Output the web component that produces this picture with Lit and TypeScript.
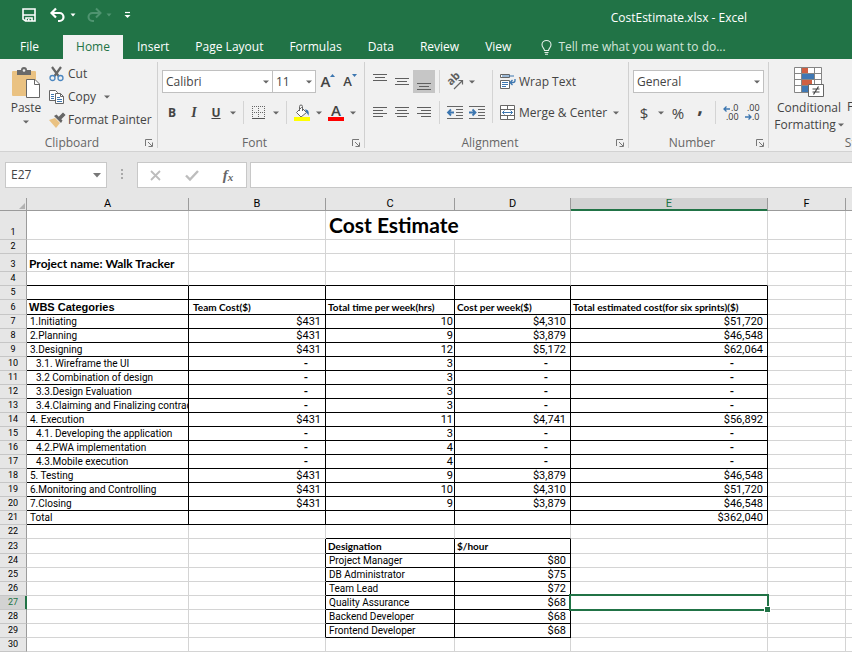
import { LitElement, html, css, svg, nothing } from "lit";
import { customElement, property } from "lit/decorators.js";
import { classMap } from "lit/directives/class-map.js";

const ink = "#5f5f5f";
const blue = "#3c76b0";

const icons: Record<string, { w: number; h: number; art: unknown }> = {
  save: {
    w: 14, h: 14,
    art: svg`<path d="M1 1h12v12H3.500L1 11z" fill="none" stroke="#fff" stroke-width="1.600"/><path d="M1 7h12M4 13v-3h6v3" fill="none" stroke="#fff" stroke-width="1.600"/><path d="M6 11h1.500v2H6z" fill="#fff"/>`,
  },
  undo: {
    w: 16, h: 14,
    art: svg`<path d="M6 0.500L1.500 5L6 9.500M2 5h7.500a4 4 0 0 1 0 8H8" fill="none" stroke="#fff" stroke-width="2.200"/>`,
  },
  redo: {
    w: 16, h: 14,
    art: svg`<path d="M10 .5l4.500 4.500L10 9.500M14 5H6.500a4 4 0 0 0 0 8H8" fill="none" stroke="#4f9470" stroke-width="2"/>`,
  },
  customize: { w: 7, h: 8, art: svg`<path d="M1 1.500h5" stroke="#fff" stroke-width="1.200"/><path d="M0.500 4h6l-3 3z" fill="#fff"/>` },
  bulb: {
    w: 11, h: 15,
    art: svg`<path d="M3.500 10.500C3.500 8.500 1 7.500 1 4.800a4.500 4.300 0 0 1 9 0C10 7.500 7.500 8.500 7.500 10.500zM3.500 12.500h4M4 14.300h3" fill="none" stroke="#e3efe8" stroke-width="1.100"/>`,
  },
  paste: {
    w: 30, h: 32,
    art: svg`<rect x="1" y="4" width="24" height="25" rx="1" fill="#eac282"/><path d="M6 3h4a3 3 0 0 1 6 0h4v5H6z" fill="#6a6a6a"/><circle cx="13" cy="3.500" r="1.300" fill="#f1f1f1"/><path d="M15.500 12.500h8.500l4.500 4.500v13.500h-13z" fill="#fff" stroke="#666"/><path d="M23.500 12.500v5h5" fill="none" stroke="#666"/>`,
  },
  cut: {
    w: 16, h: 16,
    art: svg`<path d="M3 1l6.500 9M12 1L5.500 10" stroke="#666" stroke-width="2.200" fill="none"/><circle cx="3.500" cy="12" r="2.500" fill="none" stroke="#4a86c0" stroke-width="1.300"/><circle cx="11.500" cy="12" r="2.500" fill="none" stroke="#4a86c0" stroke-width="1.300"/>`,
  },
  copy: {
    w: 16, h: 16,
    art: svg`<path d="M.5 1.500h6l2 2v8h-8z" fill="#fff" stroke="#666"/><path d="M6.500 4.500h5l3 3v7h-8z" fill="#fff" stroke="#666"/><path d="M11.500 4.500v3h3" fill="none" stroke="#666"/><path d="M2 5.500h3M2 7.500h3M2 9.500h3M8 8.500h3M8 10.500h5M8 12.500h5" stroke="${blue}"/>`,
  },
  brush: {
    w: 16, h: 16,
    art: svg`<path d="M0 8l6-2 5 5-4 5z" fill="#eac282"/><path d="M5 4l2.500-1.500 6 6L12 11z" fill="#666"/><path d="M9.500 6L14 1.500l1.500 1.500L11 7.500z" stroke="#666" stroke-width="1.500" fill="#666"/>`,
  },
  launcher: {
    w: 8, h: 8,
    art: svg`<path d="M.5 7V.5H7" fill="none" stroke="#777"/><path d="M3 3l4 4M7.500 3.500v4h-4" fill="none" stroke="#777"/>`,
  },
  caret: { w: 6, h: 4, art: svg`<path d="M0 .5h6L3 3.500z" fill="#666"/>` },
  caretWide: { w: 8, h: 5, art: svg`<path d="M0 0h8L4 4.500z" fill="#777"/>` },
  caretLight: { w: 6, h: 4, art: svg`<path d="M.5.5h5L3 3.500z" fill="#fff"/>` },
  caretDim: { w: 6, h: 4, art: svg`<path d="M.5.5h5L3 3.500z" fill="#4f9470"/>` },
  up: { w: 5, h: 3, art: svg`<path d="M0 3h5L2.500 0z" fill="${blue}"/>` },
  down: { w: 5, h: 3, art: svg`<path d="M0 0h5L2.500 3z" fill="${blue}"/>` },
  borders: {
    w: 14, h: 14,
    art: svg`<path d="M.5 0v12M6.500 0v12M12.500 0v12M0 .5h13M0 6.500h13" stroke="#666" stroke-dasharray="1 1" fill="none"/><path d="M0 12.500h13" stroke="#555"/>`,
  },
  fill: {
    w: 16, h: 16,
    art: svg`<path d="M7.500 2.500l5 5-5.500 4.500-4.500-4.500z" fill="#fff" stroke="#666"/><path d="M5.500 6V1.500a1.500 1.500 0 0 1 3 0V6" fill="none" stroke="#666"/><path d="M11 4.500c3 0 4.500 2 3.500 6.500-.5-2-1.500-2.500-2-3.500z" fill="${blue}"/><path d="M0 12h16v4H0z" fill="#ff0"/>`,
  },
  orient: {
    w: 16, h: 16,
    art: svg`<text x="0" y="0" transform="translate(4 12) rotate(-45)" font-family="Open Sans, sans-serif" font-size="11" font-weight="700" fill="#5f5f5f">ab</text><path d="M7 15l8.500-8.500M11.500 6.500h4v4" fill="none" stroke="#666" stroke-width="1.200"/>`,
  },
  outdent: {
    w: 16, h: 14,
    art: svg`<path d="M0 .5h16M9 3.500h7M9 6.500h7M9 9.500h7M0 12.500h16" stroke="#666"/><path d="M7 6.500H1.500M4 3.500l-3 3 3 3" stroke="${blue}" stroke-width="1.800" fill="none"/>`,
  },
  indent: {
    w: 16, h: 14,
    art: svg`<path d="M0 .5h16M9 3.500h7M9 6.500h7M9 9.500h7M0 12.500h16" stroke="#666"/><path d="M0 6.500h6M3.500 3.500l3 3-3 3" stroke="${blue}" stroke-width="1.800" fill="none"/>`,
  },
  wrap: {
    w: 16, h: 16,
    art: svg`<path d="M.5.5h9v3h-9zM.5 6.500h9v8h-9z" fill="#fff" stroke="#666"/><path d="M2 2h12M2 8.500h6M2 10.500h6M2 12.500h4" stroke="${blue}"/><path d="M15 5v1.500a2 2 0 0 1-2 2h-2.500M12.500 6l-2.500 2.500 2.500 2.500" fill="none" stroke="${blue}" stroke-width="1.300"/>`,
  },
  merge: {
    w: 16, h: 16,
    art: svg`<path d="M.5.5h14v14H.5zM.5 4.500h14M.5 10.500h14M7.500 .5v4M7.500 10.500v4" fill="#fff" stroke="#666"/><path d="M2.500 7.500h10M4.500 5.500l-2 2 2 2M10.500 5.500l2 2-2 2" fill="none" stroke="${blue}"/>`,
  },
  moreDecimals: {
    w: 16, h: 16,
    art: svg`<path d="M1 4h6M3.500 1.500L1 4l2.500 2.500" fill="none" stroke="${blue}" stroke-width="1.300"/><g font-family="Open Sans, sans-serif" font-size="9" fill="#333"><text x="8" y="6">.0</text><text x="3" y="15">.00</text></g>`,
  },
  fewerDecimals: {
    w: 16, h: 16,
    art: svg`<path d="M0 12h6M3.500 9.500L6 12l-2.500 2.500" fill="none" stroke="${blue}" stroke-width="1.300"/><g font-family="Open Sans, sans-serif" font-size="9" fill="#333"><text x="2" y="6">.00</text><text x="7" y="15">.0</text></g>`,
  },
  conditional: {
    w: 30, h: 31,
    art: svg`<path d="M.5.5h27v25H.5z" fill="#fff"/><path d="M8 1h6v6H8zM8 13h10v6H8z" fill="#cf5f42"/><path d="M8 7h12v6H8zM8 19h6v6H8z" fill="#3f78b4"/><path d="M.5.5h27v25H.5zM.5 6.500h27M.5 12.500h27M.5 18.500h27M7.500 .5v25M20.500 .5v25" fill="none" stroke="#858585"/><path d="M14.500 17.500h15v12h-15z" fill="#fff" stroke="#666"/><path d="M18.500 22h7M18.500 25h7M24.500 19.500l-5 8" stroke="#444" stroke-width="1.200"/>`,
  },
  tableStyle: { w: 30, h: 31, art: svg`<path d="M.5.5h27v25H.5zM.5 6.500h27M.5 12.500h27M9.500.5v25M18.500.5v25" fill="#fff" stroke="#858585"/>` },
  dots: { w: 3, h: 12, art: svg`<path d="M0 0h2v2H0zM0 4h2v2H0zM0 8h2v2H0z" fill="#a9a9a9"/>` },
  cancel: { w: 12, h: 11, art: svg`<path d="M1 1l9 9M10 1l-9 9" stroke="#bdbdbd" stroke-width="1.800"/>` },
  enter: { w: 14, h: 11, art: svg`<path d="M1 5.500l4 4L13 1" fill="none" stroke="#bdbdbd" stroke-width="2.400"/>` },
  corner: { w: 6, h: 6, art: svg`<path d="M6 0v6H0z" fill="#b2b2b2"/>` },
};

for (const side of ["left", "center", "right"]) {
  const x = side === "left" ? 0 : side === "center" ? 2 : 4;
  icons["align-" + side] = {
    w: 14, h: 14,
    art: svg`<path d="M0 1.500h14M${x} 4.500h10M0 7.500h14M${x} 10.500h10" stroke="${ink}"/>`,
  };
}
for (const [name, y] of [["top", 0], ["middle", 4], ["bottom", 9]] as [string, number][]) {
  icons["align-" + name] = {
    w: 14, h: 20,
    art: svg`<path d="M0 ${y + 2}.500h14M2 ${y + 5}.500h10M0 ${y + 8}.500h14" stroke="${ink}"/>`,
  };
}

const icon = (name: string) => {
  const i = icons[name];
  return html`<svg class="icon" width=${i.w} height=${i.h} viewBox="0 0 ${i.w} ${i.h}" aria-hidden="true">${i.art}</svg>`;
};

const shared = css`
  :host, * { box-sizing: border-box; }
  button, input, select {
    font: inherit; color: inherit; border: 0; margin: 0; padding: 0;
    background: none; border-radius: 0; outline: 0;
  }
  button { display: flex; align-items: center; justify-content: center; white-space: nowrap; }
  .icon { display: block; flex: none; overflow: visible; }
`;

@customElement("title-bar")
export class TitleBar extends LitElement {
  static styles = [shared, css`
    :host { display: block; background: #217346; color: #fff; }
    .top { display: flex; align-items: center; height: 35px; padding: 0 105px 5px 18px; }
    .quick { display: flex; align-items: center; flex: 1; }
    .quick button { width: 22px; height: 22px; }
    .quick .undo { margin-left: 7px; }
    .quick .redo { margin-left: 6px; }
    .quick .drop { width: 8px; }
    .quick .more { width: 8px; margin-left: 10px; }
    .name { font-size: 12px; line-height: 16px; padding-top: 5px; }
    .tabs { display: flex; height: 24px; overflow: hidden; }
    .tabs button { padding: 0 13px; }
    .tabs .file { width: 63px; padding: 0 4px 0 0; }
    .tabs .on { width: 60px; margin-right: 1px; padding: 0; background: #f1f1f1; color: #217346; }
    .tabs .tell { gap: 6px; margin-left: 4px; color: #d3e5da; }
  `];

  render() {
    return html`
      <header class="top">
        <div class="quick">
          <button aria-label="Save">${icon("save")}</button>
          <button class="undo" aria-label="Undo">${icon("undo")}</button>
          <button class="drop" aria-label="Undo list">${icon("caretLight")}</button>
          <button class="redo" aria-label="Redo">${icon("redo")}</button>
          <button class="drop" aria-label="Redo list">${icon("caretDim")}</button>
          <button class="more" aria-label="Customize toolbar">${icon("customize")}</button>
        </div>
        <div class="name">CostEstimate.xlsx - Excel</div>
      </header>
      <nav class="tabs">
        <button class="file">File</button>
        <button class="on">Home</button>
        ${["Insert", "Page Layout", "Formulas", "Data", "Review", "View"].map((t) => html`<button>${t}</button>`)}
        <button class="tell">${icon("bulb")}Tell me what you want to do...</button>
      </nav>`;
  }
}

@customElement("ribbon-group")
export class RibbonGroup extends LitElement {
  @property() label = "";
  @property({ type: Boolean }) plain = false;
  static styles = [shared, css`
    :host { display: flex; flex-direction: column; flex: none; height: 86px; border-right: 1px solid #d0d0d0; }
    .body { flex: 1; display: flex; }
    .foot { display: flex; align-items: center; height: 16px; padding: 0 3px 0 0; margin-bottom: -3px; }
    .foot span { flex: 1; text-align: center; color: #666; }
    .foot button { width: 10px; height: 10px; }
  `];

  render() {
    return html`
      <div class="body"><slot></slot></div>
      <div class="foot">
        <span>${this.label}</span>
        ${this.plain ? nothing : html`<button aria-label="${this.label} settings">${icon("launcher")}</button>`}
      </div>`;
  }
}

@customElement("ribbon-bar")
export class RibbonBar extends LitElement {
  static styles = [shared, css`
    :host { display: flex; height: 93px; padding-top: 3px; overflow: hidden; background: #f1f1f1; color: #444; border-bottom: 1px solid #d2d2d2; }
    .clipboard { width: 158px; }
    .font { width: 207px; }
    .alignment { width: 264px; }
    .number { width: 140px; }
    .styles { width: 188px; }
    .rows { display: flex; flex-direction: column; gap: 8px; padding-top: 8px; }
    .row { display: flex; align-items: center; height: 23px; }
    .row > button { width: 22px; height: 23px; }
    .row > .drop { width: 12px; }
    .row > .on { background: #c6c6c6; }
    .pad { padding-left: 4px; }
    .tight { padding-left: 3px; }
    .sep { width: 1px; align-self: stretch; margin: 0 4px; background: #d4d4d4; }
    .tall { margin-top: 8px; margin-bottom: 12px; }
    .big { flex-direction: column; justify-content: flex-start; line-height: 17px; padding-top: 5px; }
    .paste { width: 34px; margin-left: 9px; }
    .paste .icon + span { padding-bottom: 4px; }
    .conditional { width: 70px; margin-left: 5px; }
    .conditional .icon + span { padding-top: 1px; }
    .astable { width: 60px; margin-left: 1px; }
    .two { display: flex; align-items: center; gap: 2px; }
    .list { display: flex; flex-direction: column; padding: 0 0 0 6px; }
    .list button { height: 23px; gap: 3px; justify-content: flex-start; }
    .list .line { display: flex; align-items: center; gap: 8px; }
    .row > .wide { width: auto; gap: 3px; padding-left: 3px; }
    .row > .gap { margin-left: 3px; }
    .combo { position: relative; display: flex; }
    .combo select { width: 100%; height: 23px; padding: 0 3px; appearance: none; background: #fff; border: 1px solid #c0c0c0; }
    .combo .icon { position: absolute; right: 4px; top: 10px; pointer-events: none; }
    .family { width: 111px; }
    .size { width: 44px; margin-left: -1px; margin-right: 1px; }
    .format { width: 131px; }
    .bold { font-weight: 700; }
    .italic { font-style: italic; font-weight: 600; font-family: "Liberation Serif", serif; font-size: 14px; }
    .under { font-weight: 700; text-decoration: underline; }
    .grow, .shrink { align-items: flex-start; font-weight: 600; line-height: 22px; }
    .grow { font-size: 15px; }
    .shrink { font-size: 13px; }
    .grow .icon, .shrink .icon { margin-top: 4px; }
    .colour { flex-direction: column; font-size: 15px; font-weight: 600; line-height: 13px; }
    .bar { width: 16px; height: 4px; background: #f00; }
    .sign { font-size: 15px; }
    .row > .comma { font-size: 20px; font-weight: 700; line-height: 23px; padding-bottom: 14px; }
  `];

  render() {
    const drop = (label: string) => html`<button class="drop" aria-label=${label}>${icon("caret")}</button>`;
    const tool = (name: string, label: string, on = false) =>
      html`<button class=${classMap({ on })} aria-label=${label}>${icon(name)}</button>`;
    const sep = html`<span class="sep"></span>`;
    return html`
      <ribbon-group class="clipboard" label="Clipboard">
        <button class="big paste">${icon("paste")}<span>Paste</span>${icon("caret")}</button>
        <div class="list">
          <button>${icon("cut")}Cut</button>
          <div class="line"><button>${icon("copy")}Copy</button>${drop("Copy options")}</div>
          <button>${icon("brush")}Format Painter</button>
        </div>
      </ribbon-group>
      <ribbon-group class="font" label="Font">
        <div class="rows">
          <div class="row pad">
            <label class="combo family"><select aria-label="Font"><option>Calibri</option></select>${icon("caret")}</label>
            <label class="combo size"><select aria-label="Font size"><option>11</option></select>${icon("caret")}</label>
            <button class="grow" aria-label="Increase font size">A${icon("up")}</button>
            <button class="shrink" aria-label="Decrease font size">A${icon("down")}</button>
          </div>
          <div class="row tight">
            <button class="bold">B</button>
            <button class="italic">I</button>
            <button class="under">U</button>
            ${drop("Underline options")}${sep}${tool("borders", "Borders")}${drop("Border options")}
            ${sep}${tool("fill", "Fill colour")}${drop("Fill options")}
            <button class="colour" aria-label="Font colour">A<span class="bar"></span></button>${drop("Font colour options")}
          </div>
        </div>
      </ribbon-group>
      <ribbon-group class="alignment" label="Alignment">
        <div class="rows">
          <div class="row pad">
            ${tool("align-top", "Top align")}${tool("align-middle", "Middle align")}${tool("align-bottom", "Bottom align", true)}
            ${sep}${tool("orient", "Orientation")}${drop("Orientation options")}
          </div>
          <div class="row pad">
            ${tool("align-left", "Align left")}${tool("align-center", "Center")}${tool("align-right", "Align right")}
            ${sep}${tool("outdent", "Decrease indent")}${tool("indent", "Increase indent")}
          </div>
        </div>
        <span class="sep tall"></span>
        <div class="rows">
          <div class="row"><button class="wide">${icon("wrap")}Wrap Text</button></div>
          <div class="row">
            <button class="wide">${icon("merge")}Merge &amp; Center</button>
            <button class="drop gap" aria-label="Merge options">${icon("caret")}</button>
          </div>
        </div>
      </ribbon-group>
      <ribbon-group class="number" label="Number">
        <div class="rows">
          <div class="row pad">
            <label class="combo format"><select aria-label="Number format"><option>General</option></select>${icon("caret")}</label>
          </div>
          <div class="row pad">
            <button class="sign">$</button>${drop("Currency options")}
            <button class="sign">%</button>
            <button class="comma">,</button>
            ${sep}${tool("moreDecimals", "Increase decimal")}${tool("fewerDecimals", "Decrease decimal")}
          </div>
        </div>
      </ribbon-group>
      <ribbon-group class="styles" label="Styles" plain>
        <button class="big conditional">${icon("conditional")}<span>Conditional</span><span class="two">Formatting${icon("caret")}</span></button>
        <button class="big astable">${icon("tableStyle")}<span>Format as</span><span class="two">Table${icon("caret")}</span></button>
      </ribbon-group>`;
  }
}

@customElement("formula-bar")
export class FormulaBar extends LitElement {
  static styles = [shared, css`
    :host { display: flex; height: 46px; padding: 10px 0 10px 5px; background: #e6e6e6; color: #444; }
    .box { display: flex; align-items: center; background: #fff; border: 1px solid #c8c8c8; }
    .name { width: 102px; padding: 0 5px; }
    .name input { flex: 1; min-width: 0; }
    .handle { display: flex; align-items: center; width: 30px; padding-left: 14px; }
    .actions { width: 110px; justify-content: space-around; margin-right: 3px; }
    .actions button { width: 30px; height: 20px; }
    .fx { font: italic 700 15px "Liberation Serif", serif; color: #666; }
    .fx small { font-size: 11px; padding-top: 4px; }
    .entry { flex: 1; min-width: 0; border-right: 0; }
    .entry input { width: 100%; }
  `];

  render() {
    return html`
      <div class="box name"><input aria-label="Name box" value="E27" /><button aria-label="Names">${icon("caretWide")}</button></div>
      <div class="handle">${icon("dots")}</div>
      <div class="box actions">
        <button aria-label="Cancel">${icon("cancel")}</button>
        <button aria-label="Enter">${icon("enter")}</button>
        <button class="fx" aria-label="Insert function">f<small>x</small></button>
      </div>
      <div class="box entry"><input aria-label="Formula" /></div>`;
  }
}

/** Row number, then the texts of columns A to E. */
const cells: Record<number, string[]> = {
  1: ["", "", "Cost Estimate"],
  3: ["Project name: Walk Tracker"],
  6: ["WBS Categories", "Team Cost($)", "Total time per week(hrs)", "Cost per week($)", "Total estimated cost(for six sprints)($)"],
  7: ["1.Initiating", "$431", "10", "$4,310", "$51,720"],
  8: ["2.Planning", "$431", "9", "$3,879", "$46,548"],
  9: ["3.Designing", "$431", "12", "$5,172", "$62,064"],
  10: ["3.1. Wireframe the UI", "-", "3", "-", "-"],
  11: ["3.2 Combination of design", "-", "3", "-", "-"],
  12: ["3.3.Design Evaluation", "-", "3", "-", "-"],
  13: ["3.4.Claiming and Finalizing contracts", "-", "3", "-", "-"],
  14: ["4. Execution", "$431", "11", "$4,741", "$56,892"],
  15: ["4.1. Developing the application", "-", "3", "-", "-"],
  16: ["4.2.PWA implementation", "-", "4", "-", "-"],
  17: ["4.3.Mobile execution", "-", "4", "-", "-"],
  18: ["5. Testing", "$431", "9", "$3,879", "$46,548"],
  19: ["6.Monitoring and Controlling", "$431", "10", "$4,310", "$51,720"],
  20: ["7.Closing", "$431", "9", "$3,879", "$46,548"],
  21: ["Total", "", "", "", "$362,040"],
  23: ["", "", "Designation", "$/hour"],
  24: ["", "", "Project Manager", "$80"],
  25: ["", "", "DB Administrator", "$75"],
  26: ["", "", "Team Lead", "$72"],
  27: ["", "", "Quality Assurance", "$68"],
  28: ["", "", "Backend Developer", "$68"],
  29: ["", "", "Frontend Developer", "$68"],
};
const columns = ["A", "B", "C", "D", "E", "F", "G"];

@customElement("work-sheet")
export class WorkSheet extends LitElement {
  static styles = [shared, css`
    :host { display: block; background: #fff; color: #000; font-family: Roboto, sans-serif; font-size: 10px; line-height: 13px; }
    table { width: 100%; table-layout: fixed; border-collapse: separate; border-spacing: 0; }
    .c-row { width: 27px; }
    .c-a { width: 162px; }
    .c-b { width: 137px; }
    .c-c { width: 129px; }
    .c-d { width: 116px; }
    .c-e { width: 197px; }
    .c-f { width: 78px; }
    th, td { padding: 0; border: 0 solid #d4d4d4; border-width: 0 1px 1px 0; white-space: nowrap; font-weight: 400; }
    th:last-child, td:last-child { border-right-width: 0; }
    tr { height: 14px; }
    .r-1 { height: 29px; }
    .r-3 { height: 18px; }
    .r-6, .r-23 { height: 15px; }
    thead tr { height: 13px; }
    thead th { font-size: 11px; line-height: 12px; background: #e6e6e6; border-color: #9b9b9b; }
    thead .picked { background: #d2d2d2; color: #217346; box-shadow: inset 0 -1px #217346; border-bottom-color: #217346; }
    tbody th { background: #e6e6e6; border-color: #c6c6c6; border-right-color: #9b9b9b; font-size: 9px; vertical-align: bottom; }
    tbody .picked { background: #d2d2d2; color: #217346; border-right-color: #217346; box-shadow: inset -1px 0 #217346; }
    .all .icon { margin: 3px 1px 0 auto; }
    td { overflow: hidden; padding: 0 4px 0 3px; vertical-align: bottom; }
    .sub { padding-left: 9px; }
    .num { text-align: right; font-size: 11px; }
    .c { padding-right: 1px; }
    .dash { font-weight: 700; }
    .dash.b { padding-right: 17px; }
    .dash.d { padding-right: 22px; }
    .dash.e { padding-right: 33px; }
    .line-b { border-bottom-color: #000; }
    .line-r { border-right-color: #000; }
    .head, .name, .title { font-family: Lato, sans-serif; font-weight: 700; padding: 0 0 0 2px; }
    .head.b { padding-left: 4px; }
    .name { font-size: 12px; line-height: 15px; }
    .wbs { font-family: "Liberation Sans", sans-serif; font-weight: 700; font-size: 11px; padding-left: 2px; }
    .title { font-size: 21px; line-height: 28px; padding-left: 3px; }
    .current { position: relative; overflow: visible; }
    .cursor { position: absolute; inset: -2px; border: 2px solid #217346; }
    .grip { position: absolute; right: -4px; bottom: -4px; width: 7px; height: 7px; background: #217346; border: 1px solid #fff; }
  `];

  private cell(row: number, col: number) {
    const text = cells[row]?.[col] ?? "";
    const inMain = col < 5 && row > 4 && row < 22;
    const inSmall = (col === 2 || col === 3) && row > 22 && row < 30;
    const num = /^(\$?[\d,]+|-)$/.test(text);
    const current = row === 27 && col === 4;
    const names = {
      [columns[col].toLowerCase()]: true,
      "line-b": inMain || inSmall || (row === 4 && col < 5) || (row === 22 && (col === 2 || col === 3)),
      "line-r": inMain || inSmall || (col === 1 && row > 22 && row < 30),
      num,
      dash: text === "-",
      sub: /^\d\.\d/.test(text),
      head: (row === 6 && col > 0) || row === 23,
      name: col === 0 && row === 3,
      wbs: col === 0 && row === 6,
      title: row === 1 && col === 2,
      current,
    };
    return html`<td class=${classMap(names)} colspan=${names.title ? 2 : nothing}>${text}${current
      ? html`<div class="cursor"><div class="grip"></div></div>`
      : nothing}</td>`;
  }

  render() {
    const rows = Array.from({ length: 30 }, (_, i) => i + 1);
    return html`
      <table>
        <colgroup>
          <col class="c-row" /><col class="c-a" /><col class="c-b" /><col class="c-c" />
          <col class="c-d" /><col class="c-e" /><col class="c-f" /><col />
        </colgroup>
        <thead>
          <tr>
            <th class="all" aria-label="Select all">${icon("corner")}</th>
            ${columns.map((c) => html`<th scope="col" class=${classMap({ picked: c === "E" })}>${c === "G" ? "" : c}</th>`)}
          </tr>
        </thead>
        <tbody>
          ${rows.map((r) => html`
            <tr class="r-${r}">
              <th scope="row" class=${classMap({ picked: r === 27 })}>${r}</th>
              ${columns.map((_, c) => (r === 1 && c === 3 ? nothing : this.cell(r, c)))}
            </tr>`)}
        </tbody>
      </table>`;
  }
}

@customElement("app-root")
export class AppRoot extends LitElement {
  static styles = css`
    :host { display: block; min-height: 100vh; overflow: hidden; background: #fff; font: 12px/16px "Open Sans", "Noto Sans", sans-serif; }
  `;

  render() {
    return html`
      <title-bar></title-bar>
      <ribbon-bar></ribbon-bar>
      <formula-bar></formula-bar>
      <work-sheet></work-sheet>`;
  }
}
